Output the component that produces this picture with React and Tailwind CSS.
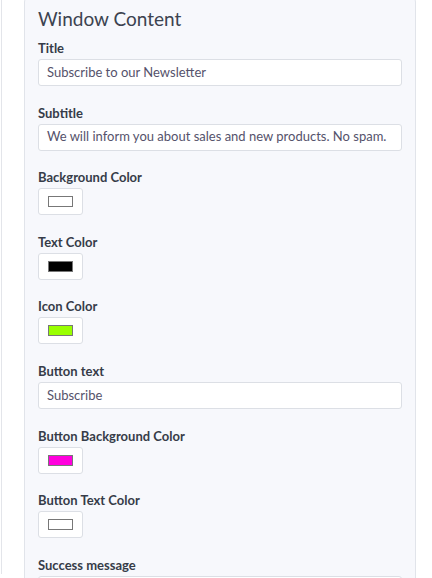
import React from "react";

const font = { fontFamily: "Lato, 'Noto Sans', sans-serif" };

function Label({ children }) {
  return (
    <div className="text-[13px] leading-[18px] font-bold text-[#363c48] mb-[2px]">
      {children}
    </div>
  );
}

function TextField({ label, value }) {
  return (
    <div className="mb-[17.6px]">
      <Label>{label}</Label>
      <div className="h-[27px] bg-white border border-[#dcdfe5] rounded-[3px] pl-[8px] flex items-center text-[13px] text-[#55526b] whitespace-nowrap overflow-hidden">
        {value}
      </div>
    </div>
  );
}

function ColorField({ label, color }) {
  return (
    <div className="mb-[17.6px]">
      <Label>{label}</Label>
      <div className="w-[45px] h-[27px] bg-white border border-[#dcdfe5] rounded-[3px] flex items-center justify-center">
        <div className={`w-[25px] h-[11px] border border-[#777] ${color}`} />
      </div>
    </div>
  );
}

export default function App() {
  return (
    <div style={font} className="w-[432px] h-[578px] overflow-hidden bg-white">
      <div className="h-full ml-px border-l border-[#e3e5ea] pl-[22px] pr-[16px]">
        <div className="-mt-[4px] bg-[#f7f8fc] border border-[#e1e4ea] rounded-md pt-[10px] pl-[13px] pr-[13px] pb-4">
          <h2 className="text-[19px] leading-[24px] text-[#3c4350] mb-[8px]">Window Content</h2>
          <TextField label="Title" value="Subscribe to our Newsletter" />
          <TextField
            label="Subtitle"
            value="We will inform you about sales and new products. No spam."
          />
          <ColorField label="Background Color" color="bg-white" />
          <ColorField label="Text Color" color="bg-black" />
          <ColorField label="Icon Color" color="bg-[#99ff00]" />
          <TextField label="Button text" value="Subscribe" />
          <ColorField label="Button Background Color" color="bg-[#ff00dd]" />
          <ColorField label="Button Text Color" color="bg-white" />
          <TextField label="Success message" value="" />
        </div>
      </div>
    </div>
  );
}
